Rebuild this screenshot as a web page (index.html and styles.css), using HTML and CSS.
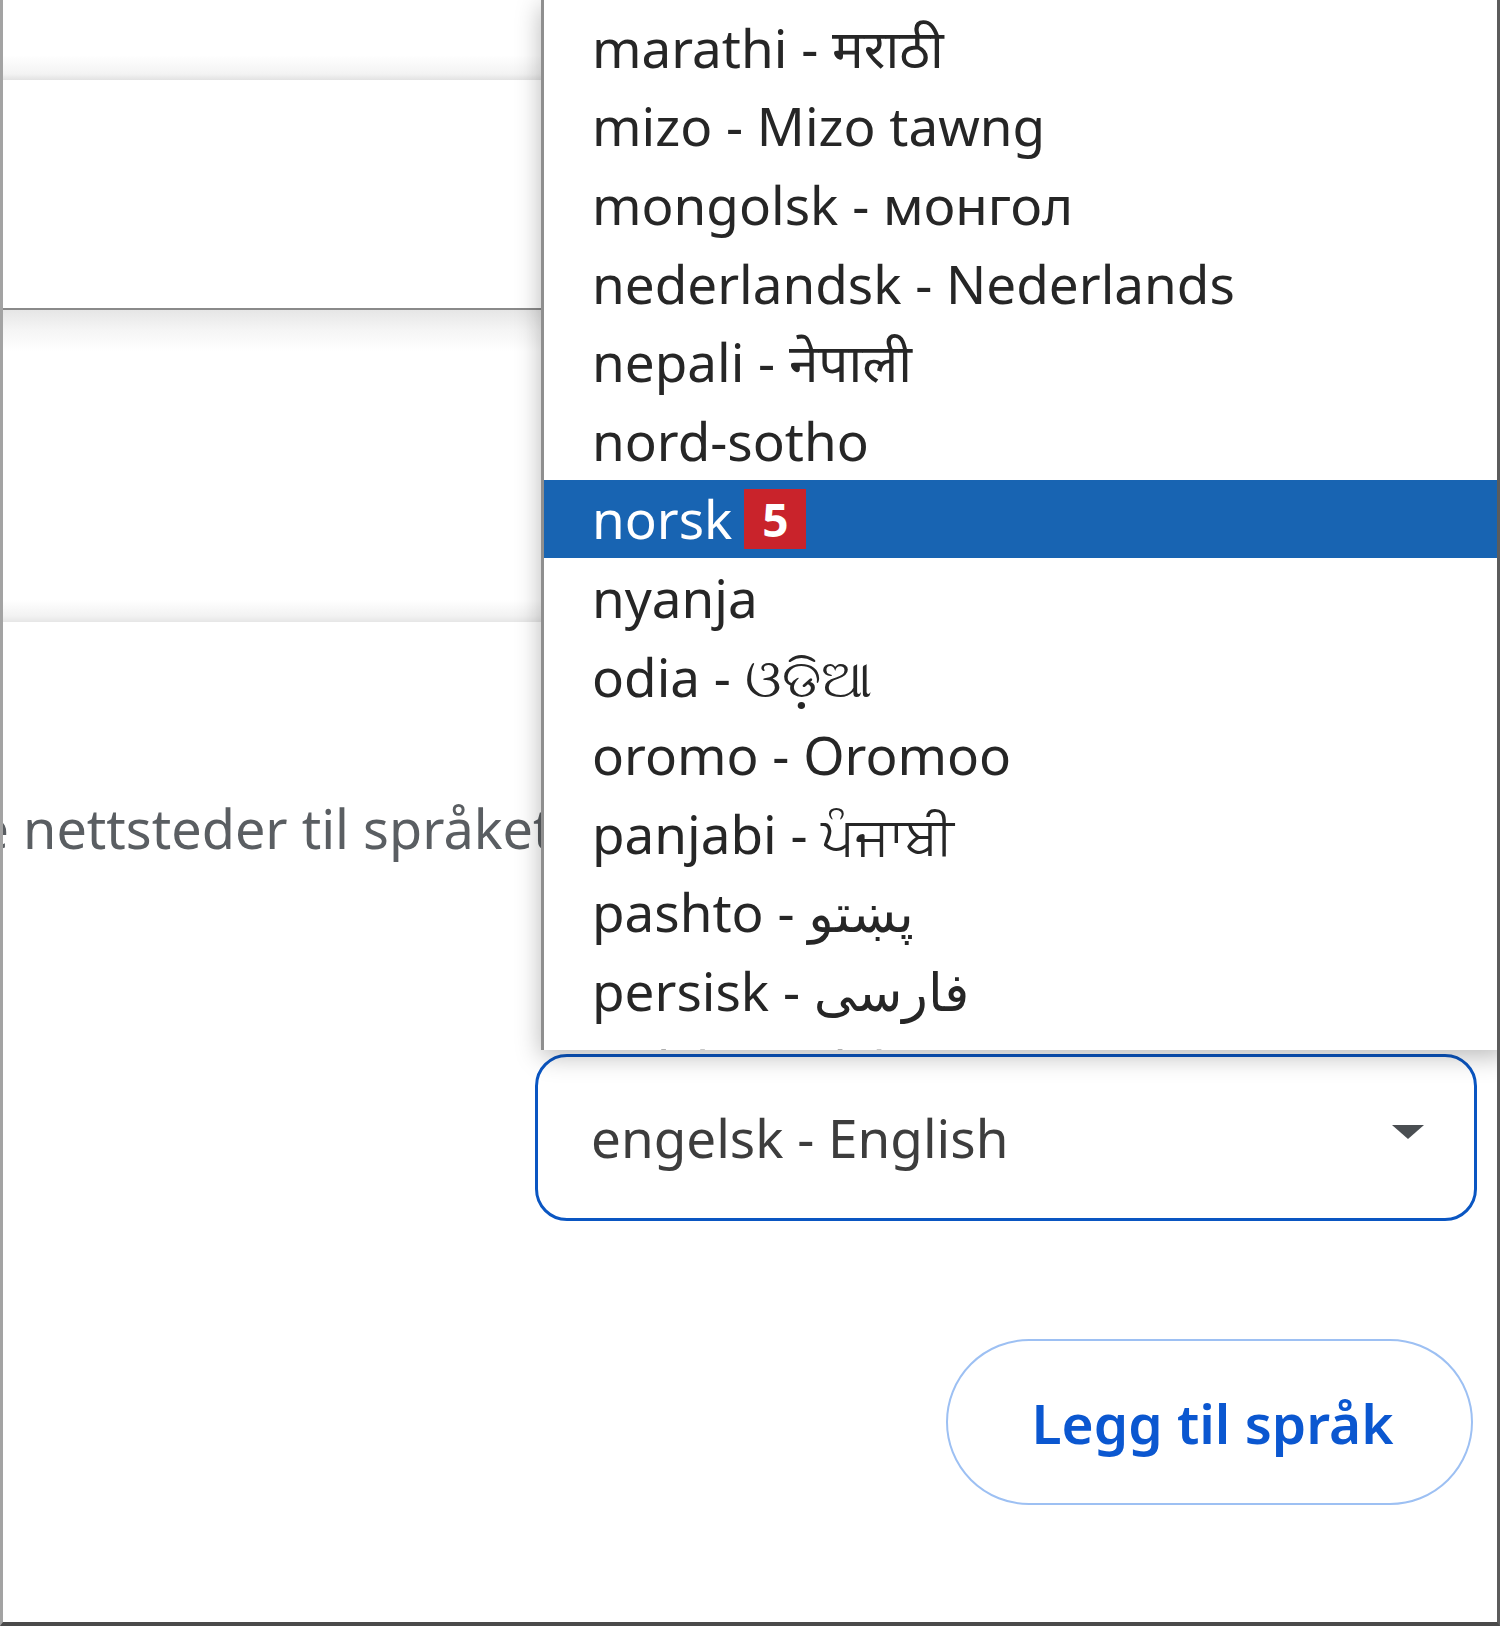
FILE: index.html
```html
<!DOCTYPE html>
<html lang="nb">
<head>
    <meta charset="UTF-8">
    <title>Legg til språk</title>
    <link rel="stylesheet" href="styles.css">
</head>
<body>
    <div class="page">
        <!-- Bakgrunn: kort fra innstillingssiden -->
        <div class="band band-top"></div>
        <div class="band band-mid"></div>
        <div class="band band-low"></div>

        <p class="hint"><span class="cut">Tilby å oversette</span> nettsteder til språket</p>

        <div class="field">
            <div class="select">
                <span class="select-value">engelsk - English</span>
                <span class="select-arrow"></span>
            </div>
        </div>

        <div class="actions">
            <button class="btn-add">Legg til språk</button>
        </div>

        <!-- Åpen nedtrekksliste -->
        <ul class="dropdown">
            <li class="opt">marathi - मराठी</li>
            <li class="opt">mizo - Mizo tawng</li>
            <li class="opt">mongolsk - монгол</li>
            <li class="opt">nederlandsk - Nederlands</li>
            <li class="opt">nepali - नेपाली</li>
            <li class="opt">nord-sotho</li>
            <li class="opt selected">norsk <span class="badge">5</span></li>
            <li class="opt">nyanja</li>
            <li class="opt">odia - ଓଡ଼ିଆ</li>
            <li class="opt">oromo - Oromoo</li>
            <li class="opt">panjabi - ਪੰਜਾਬੀ</li>
            <li class="opt">pashto - پښتو</li>
            <li class="opt">persisk - فارسی</li>
            <li class="opt">polsk - polski</li>
        </ul>
    </div>
</body>
</html>
```
FILE: styles.css
```css
body {
    margin: 0;
    background: #fff;
    font-family: "Noto Sans", "Open Sans", "DejaVu Sans", sans-serif;
}
.page {
    position: relative;
    width: 1500px;
    height: 1626px;
    box-sizing: border-box;
    border-left: 3px solid #a3a3a3;
    border-right: 3px solid #5c5c5c;
    border-bottom: 4px solid #4a4a4a;
    overflow: hidden;
    background: #fff;
}
.band {
    box-sizing: border-box;
}
.band-top {
    height: 80px;
    background: linear-gradient(to bottom, #fff 0, #fff 55px, #f3f3f3 74px, #e2e2e2 80px);
}
.band-mid {
    height: 230px;
    border-bottom: 2px solid #8a8a8a;
    background: #fff;
}
.band-low {
    height: 312px;
    background: linear-gradient(to bottom, #e6e6e6 0, #f5f5f5 20px, #fff 42px, #fff 290px, #f2f2f2 306px, #e6e6e6 312px);
}
.hint {
    margin: 176px 0 0 0;
    font-size: 54px;
    line-height: 60px;
    color: #5a5e62;
    white-space: nowrap;
}
.cut {
    display: inline-block;
    width: 6px;
    overflow: hidden;
    direction: rtl;
    vertical-align: bottom;
}
.field {
    margin-top: 196px;
    padding-left: 532px;
}
.select {
    display: flex;
    align-items: center;
    justify-content: space-between;
    width: 942px;
    height: 167px;
    box-sizing: border-box;
    border: 3.5px solid #0a56c2;
    border-radius: 32px;
    padding: 0 50px 0 53px;
}
.select-value {
    font-size: 53px;
    color: #3d3d3d;
}
.select-arrow {
    width: 0;
    height: 0;
    border-left: 16px solid transparent;
    border-right: 16px solid transparent;
    border-top: 14px solid #4a4e52;
    margin-top: -12px;
}
.actions {
    display: flex;
    justify-content: flex-end;
    padding-right: 24px;
    margin-top: 118px;
}
.btn-add {
    width: 527px;
    height: 166px;
    border: 2px solid #9dc0f3;
    border-radius: 83px;
    background: #fff;
    color: #0b57d0;
    font-family: inherit;
    font-size: 55px;
    font-weight: 600;
    padding: 0 0 0 6px;
}
.dropdown {
    position: absolute;
    left: 538px;
    top: 0;
    right: -10px;
    height: 1050px;
    margin: 0;
    padding: 8px 0 0 0;
    list-style: none;
    box-sizing: border-box;
    border-left: 3px solid #8f8f8f;
    background: #fff;
    overflow: hidden;
    box-shadow: 0 6px 24px rgba(0, 0, 0, 0.28);
}
.opt {
    display: flex;
    align-items: center;
    height: 78.6px;
    padding-left: 48px;
    font-size: 53px;
    color: #262626;
    white-space: nowrap;
}
.opt.selected {
    background: #1864b2;
    color: #fff;
}
.badge {
    display: inline-flex;
    align-items: center;
    justify-content: center;
    width: 62px;
    height: 60px;
    margin-left: 12px;
    background: #c9232b;
    color: #fff;
    font-weight: 700;
    font-size: 46px;
}
```
